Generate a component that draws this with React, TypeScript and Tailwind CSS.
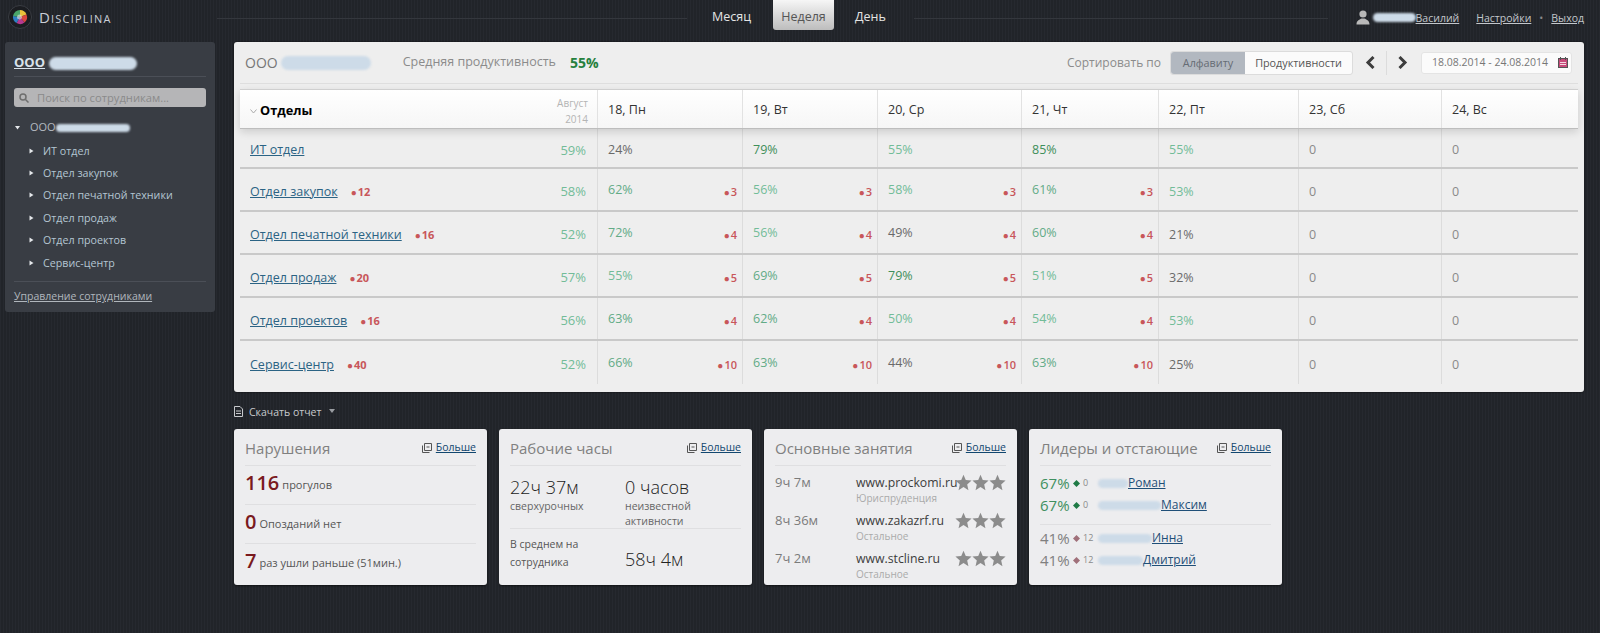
import React from 'react';

const cols = 'grid grid-cols-[357px_145px_135px_144px_137px_140px_143px_135px]';
const dayNames = ['18, Пн', '19, Вт', '20, Ср', '21, Чт', '22, Пт', '23, Сб', '24, Вс'];

interface Dept {
  name: string;
  total?: number;
  month: number;
  days: number[];
  perDay?: number;
}

const depts: Dept[] = [
  { name: 'ИТ отдел', month: 59, days: [24, 79, 55, 85, 55, 0, 0] },
  { name: 'Отдел закупок', total: 12, month: 58, days: [62, 56, 58, 61, 53, 0, 0], perDay: 3 },
  { name: 'Отдел печатной техники', total: 16, month: 52, days: [72, 56, 49, 60, 21, 0, 0], perDay: 4 },
  { name: 'Отдел продаж', total: 20, month: 57, days: [55, 69, 79, 51, 32, 0, 0], perDay: 5 },
  { name: 'Отдел проектов', total: 16, month: 56, days: [63, 62, 50, 54, 53, 0, 0], perDay: 4 },
  { name: 'Сервис-центр', total: 40, month: 52, days: [66, 63, 44, 63, 25, 0, 0], perDay: 10 },
];

const pctColor = (v: number) => {
  if (v === 0) return 'text-[#8a8a8a]';
  if (v < 50) return 'text-[#6a6a6a]';
  if (v >= 75) return 'text-[#3f8f5a]';
  if (v >= 60) return 'text-[#62ab86]';
  return 'text-[#72bc98]';
};

const Blob = ({ w, h = 'h-[11px]' }: { w: string; h?: string }) => (
  <span className={`inline-block ${w} ${h} rounded-full bg-[#cddbe8] blur-[1px] align-middle`} />
);

const Logo = () => (
  <svg width="24" height="24" viewBox="0 0 24 24" className="shrink-0">
    <circle cx="12" cy="12" r="11.5" fill="#1b1d21" stroke="#3a3d43" />
    <path d="M12 12 L12 5 A7 7 0 0 1 18.5 9.5 Z" fill="#e8c23a" />
    <path d="M12 12 L18.5 9.5 A7 7 0 0 1 16.5 17.5 Z" fill="#d9473f" />
    <path d="M12 12 L16.5 17.5 A7 7 0 0 1 8.5 18 Z" fill="#b5398f" />
    <path d="M12 12 L8.5 18 A7 7 0 0 1 5 11 Z" fill="#2f7fc4" />
    <path d="M12 12 L5 11 A7 7 0 0 1 12 5 Z" fill="#4aa56a" />
    <circle cx="11.5" cy="12" r="2.5" fill="#e6e6e6" opacity="0.6" />
  </svg>
);

const Caret = ({ dir }: { dir: 'right' | 'down' }) => (
  <svg width="5" height="6" viewBox="0 0 5 6" className="shrink-0">
    {dir === 'right' ? <path d="M0.5 0.5 L4.5 3 L0.5 5.5 Z" fill="#e4e7ea" /> : <path d="M0 1 L5 1 L2.5 4.5 Z" fill="#e4e7ea" />}
  </svg>
);

const More = () => (
  <a className="mb-[2px] flex items-center gap-[4px] text-[10.5px] leading-none text-[#12476f]">
    <svg width="10" height="10" viewBox="0 0 10 10" fill="none" stroke="#555">
      <path d="M2.5 0.5 H9.5 V7.5 H2.5 Z" />
      <path d="M0.5 2.5 V9.5 H7.5" />
      <path d="M4.5 4 H7.5" />
    </svg>
    <span className="underline">Больше</span>
  </a>
);

const Card = ({ title, children }: { title: string; children: React.ReactNode }) => (
  <div className="flex h-[156px] w-[253px] flex-col rounded-[3px] bg-[#ededef] px-[11px] shadow-[0_1px_2px_rgba(0,0,0,0.5)]">
    <div className="flex h-[37px] shrink-0 items-center justify-between border-b border-[#dfdfe1] pt-[3px]">
      <span className="text-[15px] text-[#808080]">{title}</span>
      <More />
    </div>
    {children}
  </div>
);

const Violation = ({ n, label, last }: { n: string; label: string; last?: boolean }) => (
  <div className={`flex h-[39px] items-center gap-[3px] pb-[5px] ${last ? '' : 'border-b border-[#dfdfe1]'}`}>
    <span className="text-[20px] leading-none font-semibold text-[#7a1a1e]">{n}</span>
    <span className="pt-[3px] text-[11px] leading-none text-[#555]">{label}</span>
  </div>
);

const Star = () => (
  <svg width="17" height="17" viewBox="0 0 24 24" fill="#8c8c8c">
    <path d="M12 1 L15.2 8.6 L23.4 9.3 L17.2 14.7 L19 22.8 L12 18.5 L5 22.8 L6.8 14.7 L0.6 9.3 L8.8 8.6 Z" />
  </svg>
);

const Activity = ({ time, site, cat }: { time: string; site: string; cat: string }) => (
  <div className="relative flex h-[38px] items-start pt-[8px]">
    <span className="w-[81px] shrink-0 text-[13px] leading-[17px] text-[#7b7b7b]">{time}</span>
    <div className="min-w-0 flex-1 leading-none">
      <div className="text-[12.25px] leading-[17px] whitespace-nowrap text-[#3c3c3c]">{site}</div>
      <div className="text-[10px] leading-[14px] text-[#aaa]">{cat}</div>
    </div>
    <div className="absolute right-0 flex">
      <Star />
      <Star />
      <Star />
    </div>
  </div>
);

const Leader = ({ pct, n, blob, name, up }: { pct: string; n: string; blob: string; name: string; up: boolean }) => (
  <div className="flex h-[22px] items-center">
    <span className={`w-[32px] text-[15px] leading-none ${up ? 'text-[#3f9060]' : 'text-[#808080]'}`}>{pct}</span>
    <svg width="7" height="7" viewBox="0 0 7 7" className="ml-[1px]">
      <path d="M3.5 0 L7 3.5 L3.5 7 L0 3.5 Z" fill={up ? '#1f7a45' : '#a0707a'} />
    </svg>
    <span className="ml-[3px] w-[15px] text-[9px] text-[#8a8a8a]">{n}</span>
    <a className="flex items-center text-[12px] leading-none text-[#1f4f78] underline">
      <Blob w={blob} h="h-[9px]" />
      {name}
    </a>
  </div>
);

export default function App() {
  return (
    <div className="h-[633px] w-[1600px] overflow-hidden bg-[#23262c] bg-[repeating-linear-gradient(90deg,#26292f_0,#26292f_1px,#212429_1px,#212429_3px)] font-['Open_Sans','Noto_Sans',sans-serif]">
      {/* Top bar */}
      <header className="flex h-[42px] items-start">
        <div className="flex w-[217px] shrink-0 items-center gap-[7px] pt-[5px] pl-[8px]">
          <Logo />
          <span className="text-[15px] leading-none tracking-[1.2px] text-[#c9ced6] [font-variant:small-caps]">Disciplina</span>
        </div>
        <div className="mt-[18px] h-px w-[470px] bg-[#34373d]" />
        <nav className="ml-[25px] flex items-start text-[12.5px]">
          <span className="w-[42px] pt-[8px] leading-[17px] text-[#e4e4e4]">Месяц</span>
          <span className="ml-[19px] h-[30px] w-[61px] rounded-b-[3px] bg-linear-to-b from-[#f6f6f6] to-[#bdbdbd] pt-[8px] text-center leading-[17px] text-[#555]">Неделя</span>
          <span className="ml-[21px] pt-[8px] leading-[17px] text-[#e4e4e4]">День</span>
        </nav>
        <div className="mt-[18px] ml-[28px] h-px w-[414px] bg-[#34373d]" />
        <div className="flex flex-1 items-center justify-end pt-[10px] pr-[16px] text-[10.5px] leading-[14px] text-[#c3c7cc]">
          <svg width="14" height="15" viewBox="0 0 14 15" fill="#b9b9b9" className="mr-[3px]">
            <circle cx="7" cy="4" r="3.6" />
            <path d="M0.5 14.5 C0.5 10 4 9.5 5.5 8.5 H8.5 C10 9.5 13.5 10 13.5 14.5 Z" />
          </svg>
          <Blob w="w-[43px]" h="h-[9px]" />
          <a className="underline">Василий</a>
          <a className="ml-[17px] underline">Настройки</a>
          <span className="mx-[8px] text-[#888]">•</span>
          <a className="underline">Выход</a>
        </div>
      </header>

      <div className="flex items-start pl-[5px]">
        {/* Sidebar */}
        <aside className="h-[270px] w-[210px] shrink-0 rounded-[3px] bg-[#393d44] px-[9px]">
          <div className="flex h-[35px] items-center border-b border-[#4b4f57] pt-[7px] text-[13px] leading-none font-bold text-[#d8e2ea]">
            <span className="underline">ООО</span>
            <span className="ml-[4px]"><Blob w="w-[88px]" h="h-[13px]" /></span>
          </div>
          <div className="mt-[11px] flex h-[19px] items-center gap-[8px] rounded-[3px] bg-[#b5b5b7] pl-[5px] text-[11.2px] leading-none text-[#8a8a8a]">
            <svg width="10" height="10" viewBox="0 0 10 10" fill="none" stroke="#6e6e6e" strokeWidth="1.5">
              <circle cx="4" cy="4" r="3" />
              <path d="M6.5 6.5 L9.5 9.5" />
            </svg>
            Поиск по сотрудникам...
          </div>
          <div className="mt-[9px] flex h-[22px] items-center pt-[1px] text-[11px] text-[#b4bac0]">
            <span className="ml-[1px] w-[15px]"><Caret dir="down" /></span>
            ООО
            <Blob w="w-[74px]" h="h-[8px]" />
          </div>
          <ul className="border-b border-[#4b4f57] pb-[9px] text-[10.7px] text-[#b4c6d2]">
            {depts.map((d) => (
              <li key={d.name} className="flex h-[22.4px] items-center pt-[3px] pl-[15px] whitespace-nowrap">
                <span className="w-[14px]"><Caret dir="right" /></span>
                {d.name}
              </li>
            ))}
          </ul>
          <a className="mt-[7px] block text-[10.5px] leading-[15px] whitespace-nowrap text-[#b0b6bc] underline">Управление сотрудниками</a>
        </aside>

        <main className="ml-[19px] w-[1350px]">
          {/* Department table */}
          <section className="h-[350px] rounded-[3px] bg-[#eeeeee] pl-[6px] shadow-[0_0_2px_rgba(0,0,0,0.8)]">
            <div className="mr-[6px] flex h-[42px] items-center border-b border-[#dedede] pr-[6px] pl-[5px] text-[12.5px] text-[#8b8b8b]">
              <span className="text-[14px] text-[#777]">ООО</span>
              <span className="ml-[3px]"><Blob w="w-[90px]" h="h-[14px]" /></span>
              <span className="ml-[32px]">Средняя продуктивность</span>
              <span className="ml-[14px] text-[14px] font-bold text-[#25803d]">55%</span>
              <span className="ml-auto text-[12px]">Сортировать по</span>
              <div className="ml-[9px] flex h-[24px] items-stretch rounded-[3px] border border-[#dcdcdc] text-[10.8px] leading-[22px]">
                <span className="w-[74px] rounded-l-[3px] bg-[#b2b8c0] text-center text-[#666c74]">Алфавиту</span>
                <span className="w-[107px] rounded-r-[3px] bg-[#fbfbfb] text-center text-[#555]">Продуктивности</span>
              </div>
              <svg width="13" height="13" viewBox="0 0 13 13" className="ml-[11px]">
                <path d="M9.5 1 L4 6.5 L9.5 12" fill="none" stroke="#3d3d3d" strokeWidth="3" />
              </svg>
              <span className="mx-[9px] h-[24px] w-px bg-[#dcdcdc]" />
              <svg width="13" height="13" viewBox="0 0 13 13">
                <path d="M3.5 1 L9 6.5 L3.5 12" fill="none" stroke="#3d3d3d" strokeWidth="3" />
              </svg>
              <div className="ml-[12px] flex h-[22px] w-[151px] items-center justify-between rounded-[3px] border border-[#e4e4e4] bg-[#fbfbfb] pr-[3px] pl-[10px] text-[10.5px] text-[#777]">
                18.08.2014 - 24.08.2014
                <svg width="10" height="11" viewBox="0 0 10 11">
                  <rect x="0.5" y="1.5" width="9" height="9" fill="#c84a7a" stroke="#555" />
                  <rect x="2" y="5" width="6" height="1" fill="#f3d6e0" />
                  <rect x="2" y="7" width="6" height="1" fill="#f3d6e0" />
                  <rect x="2" y="0" width="1" height="3" fill="#555" />
                  <rect x="7" y="0" width="1" height="3" fill="#555" />
                </svg>
              </div>
            </div>

            <div className={`${cols} relative z-10 mt-[5px] h-[40px] w-[1338px] border-y border-t-[#cfcfcf] border-b-[#bdbdbd] bg-linear-to-b from-white to-[#f6f6f6] shadow-[0_3px_8px_rgba(0,0,0,0.14)]`}>
              <div className="flex items-center pr-[9px] pl-[10px]">
                <svg width="7" height="5" viewBox="0 0 7 5" className="mt-[4px] mr-[3px]">
                  <path d="M0.5 0.5 L3.5 4 L6.5 0.5" fill="none" stroke="#aaa" />
                </svg>
                <span className="pt-[3px] text-[12.75px] font-bold text-black">Отделы</span>
                <span className="ml-auto pt-[3px] text-right text-[10px] leading-[16px] text-[#b4b4b4]">Август<br />2014</span>
              </div>
              {dayNames.map((d) => (
                <div key={d} className="flex items-center border-l border-[#e2e2e2] pt-[3px] pl-[10px] text-[12.5px] text-[#333]">{d}</div>
              ))}
            </div>

            {depts.map((d, i) => (
              <div key={d.name} className={`${cols} w-[1338px] ${i === 0 ? 'h-[40px]' : 'h-[43px]'} ${i < depts.length - 1 ? 'border-b-2 border-[#c9c9c9]' : ''}`}>
                <div className="flex items-center pt-[5px] pr-[11px] pl-[10px] text-[12.5px]">
                  <a className="text-[#2b6384] underline">{d.name}</a>
                  {d.total !== undefined && (
                    <span className="ml-[13px] text-[11px] font-bold text-[#c8565a]">
                      <span className="mr-px text-[10px]">●</span>{d.total}
                    </span>
                  )}
                  <span className={`ml-auto text-[13px] ${pctColor(d.month)}`}>{d.month}%</span>
                </div>
                {d.days.map((v, j) => (
                  <div key={j} className="flex items-center justify-between border-l border-[#dcdcdc] pt-[5px] pr-[5px] pl-[10px]">
                    <span className={`text-[12.5px] ${d.perDay && j < 4 ? 'mb-[4px]' : ''} ${pctColor(v)}`}>{v === 0 ? '0' : `${v}%`}</span>
                    {d.perDay && j < 4 && (
                      <span className="text-[11px] font-semibold text-[#c8565a]">
                        <span className="mr-px text-[10px]">●</span>{d.perDay}
                      </span>
                    )}
                  </div>
                ))}
              </div>
            ))}
          </section>

          {/* Report link */}
          <div className="mt-[12px] flex h-[14px] items-center text-[10.5px] leading-none text-[#c7c9cc]">
            <svg width="9" height="11" viewBox="0 0 9 11" fill="none" stroke="#c7c9cc">
              <path d="M0.5 0.5 H6 L8.5 3 V10.5 H0.5 Z" />
              <path d="M2 5 H7 M2 7.5 H7" />
            </svg>
            <span className="ml-[6px] pt-[2px]">Скачать отчет</span>
            <svg width="6" height="4" viewBox="0 0 6 4" className="ml-[8px]">
              <path d="M0 0 H6 L3 4 Z" fill="#9a9da2" />
            </svg>
          </div>

          {/* Summary cards */}
          <div className="mt-[11px] flex gap-[12px]">
            <Card title="Нарушения">
              <Violation n="116" label="прогулов" />
              <Violation n="0" label="Опозданий нет" />
              <Violation n="7" label="раз ушли раньше (51мин.)" last />
            </Card>

            <Card title="Рабочие часы">
              <div className="flex h-[63px] shrink-0 border-b border-[#dfdfe1] pt-[9px]">
                <div className="w-[115px]">
                  <div className="text-[18px] leading-[24px] font-light text-[#222]">22ч 37м</div>
                  <div className="text-[10.5px] leading-[15px] text-[#666]">сверхурочных</div>
                </div>
                <div>
                  <div className="text-[18px] leading-[24px] font-light text-[#222]">0 часов</div>
                  <div className="text-[10.5px] leading-[15px] text-[#666]">неизвестной<br />активности</div>
                </div>
              </div>
              <div className="flex flex-1 items-start pt-[6px]">
                <div className="w-[115px] text-[10.5px] leading-[18px] text-[#555]">В среднем на<br />сотрудника</div>
                <div className="pt-[13px] text-[18px] leading-[22px] font-light text-[#222]">58ч 4м</div>
              </div>
            </Card>

            <Card title="Основные занятия">
              <Activity time="9ч 7м" site="www.prockomi.ru" cat="Юриспруденция" />
              <Activity time="8ч 36м" site="www.zakazrf.ru" cat="Остальное" />
              <Activity time="7ч 2м" site="www.stcline.ru" cat="Остальное" />
            </Card>

            <Card title="Лидеры и отстающие">
              <div className="h-[59px] shrink-0 border-b border-[#dfdfe1] pt-[6px]">
                <Leader pct="67%" n="0" blob="w-[30px]" name="Роман" up />
                <Leader pct="67%" n="0" blob="w-[63px]" name="Максим" up />
              </div>
              <div className="pt-[2px]">
                <Leader pct="41%" n="12" blob="w-[54px]" name="Инна" up={false} />
                <Leader pct="41%" n="12" blob="w-[45px]" name="Дмитрий" up={false} />
              </div>
            </Card>
          </div>
        </main>
      </div>
    </div>
  );
}
